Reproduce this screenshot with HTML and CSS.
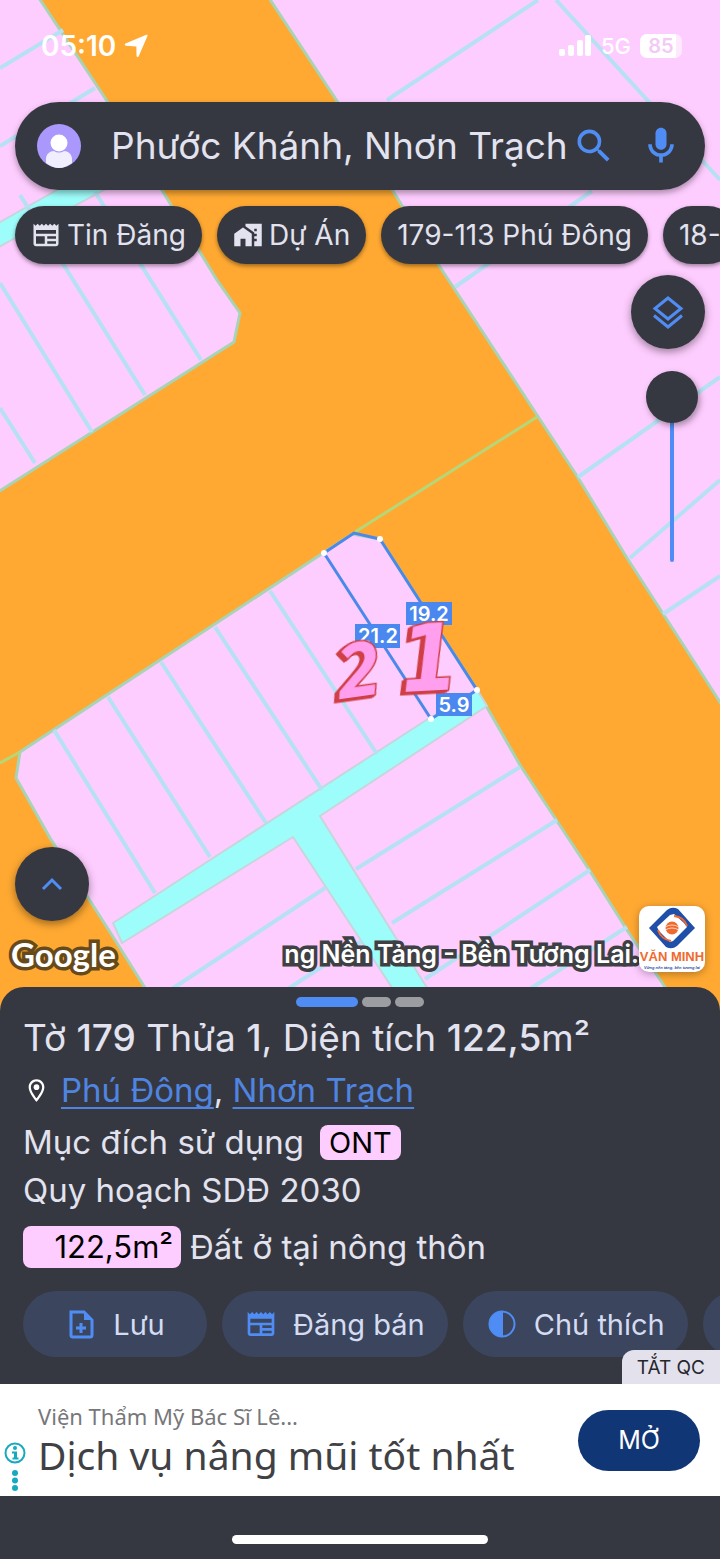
FILE: index.html
```
<!DOCTYPE html>
<html lang="vi">
<head>
    <meta charset="UTF-8">
    <meta name="viewport" content="width=device-width, initial-scale=1.0">
    <title>Phước Khánh, Nhơn Trạch</title>
    <link rel="stylesheet" href="styles.css">
</head>
<body>
<main class="map">
    <!-- Parcel map -->
    <svg class="map-canvas" viewBox="0 0 720 1012" preserveAspectRatio="xMidYMin slice" role="img" aria-label="Bản đồ thửa đất">
        <g class="land">
            <polygon points="-5,-5 37,-5 107,101 168,200 217,280 240,313 234,342 -5,494"/>
            <polygon points="267,-5 337,101 393,191 438,264 537,415 577,476 627,558 693,660 725,710 725,-5"/>
            <polygon points="352,534 380,539 477,690 520,765 590,871 627,930 665,987 682,1015 162,1015 115,940 50,838 16,778 20,752"/>
        </g>
        <g class="canal">
            <polygon points="-5,225 135,146 150,165 -5,249"/>
            <polygon points="113,923 210,860 431,717 477,690 487,706 320,816 444,1015 410,1015 293,837 122,943"/>
        </g>
        <g class="lots">
            <path d="M0 68L63 30M0 146L95 88M95 192L201 360M20 195L145 395M0 283L92 432M0 408L35 463"/>
            <path d="M538 0L387 100M556 0L720 180M592 191L455 287M720 377L578 477M720 480L630 558M720 576L663 614"/>
            <path d="M270 591L377 754M215 627L322 790M161 662L266 823M108 697L210 857M54 730L155 893"/>
            <path d="M325 888L140 1010M362 941L255 1010M356 869L520 767M392 923L557 820M425 979L590 870M500 1008L627 927"/>
        </g>
        <path class="boundary" d="M0 763L20 752M355 532L537 417"/>

        <polygon class="selected" points="324,553 354,533 380,539 477,690 431,719"/>
        <g class="node">
            <circle cx="324" cy="553" r="3"/>
            <circle cx="380" cy="539" r="3"/>
            <circle cx="477" cy="690" r="3"/>
            <circle cx="431" cy="719" r="3"/>
        </g>
        <g class="length">
            <rect x="406" y="602" width="46" height="23"/>
            <rect x="355" y="624" width="45" height="24"/>
            <rect x="436" y="693" width="36" height="23"/>
            <text x="429" y="621">19.2</text>
            <text x="378" y="643">21.2</text>
            <text x="454" y="712">5.9</text>
        </g>
        <text class="lot-no lot-small" x="341" y="699" transform="rotate(-8 341 699)">2</text>
        <text class="lot-no lot-big" x="402" y="692" transform="rotate(-3 402 692)">1</text>
    </svg>

    <div class="status">
        <span class="time">05:10</span>
        <svg width="24" height="24" viewBox="0 0 22 22" fill="#fff" aria-hidden="true"><path d="M20.500.8c.8-.3 1.300.2 1 1L13.500 20.500c-.5 1-1.800.9-2-.3l-.2-8.800-9.500-.6C.4 10.300.4 9 1.400 8.600z"/></svg>
        <svg class="signal" width="33" height="22" viewBox="0 0 33 22" fill="#fff" aria-hidden="true"><rect y="14" width="6" height="7" rx="2"/><rect x="9" y="10" width="6" height="11" rx="2"/><rect x="18" y="5" width="6" height="16" rx="2"/><rect x="26" width="6" height="21" rx="2"/></svg>
        <span class="network">5G</span>
        <span class="battery">85</span>
    </div>

    <form class="search">
        <svg class="avatar" viewBox="0 0 44 44" aria-hidden="true">
            <circle cx="22" cy="22" r="22" fill="#ab98fd"/>
            <circle cx="22" cy="19" r="8.500" fill="#fff"/>
            <path d="M9 39V35c0-5 4-8 8-8 3 2 7 2 10 0 4 0 8 3 8 8v4q-13 10-26 0z" fill="#f1efff"/>
        </svg>
        <input type="text" value="Phước Khánh, Nhơn Trạch" aria-label="Tìm kiếm">
        <button type="button" aria-label="Tìm">
            <svg width="44" height="44" viewBox="0 0 24 24"><path d="M15.500 14h-.79l-.28-.27A6.470 6.470 0 0 0 16 9.500 6.500 6.500 0 1 0 9.500 16c1.610 0 3.090-.59 4.230-1.570l.27.28v.79l5 4.990L20.490 19l-4.990-5zm-6 0C7.010 14 5 11.990 5 9.500S7.010 5 9.500 5 14 7.010 14 9.500 11.990 14 9.500 14z"/></svg>
        </button>
        <button type="button" aria-label="Giọng nói">
            <svg width="44" height="44" viewBox="0 0 24 24"><path d="M12 14c1.660 0 3-1.340 3-3V5c0-1.660-1.340-3-3-3S9 3.340 9 5v6c0 1.660 1.340 3 3 3z"/><path d="M17 11c0 2.760-2.240 5-5 5s-5-2.240-5-5H5c0 3.530 2.610 6.430 6 6.920V21h2v-3.080c3.390-.49 6-3.390 6-6.920h-2z"/></svg>
        </button>
    </form>

    <nav class="chips">
        <button type="button">
            <svg width="30" height="30" viewBox="0 0 24 24"><path d="M22 3l-1.670 1.670L18.670 3 17 4.670 15.330 3l-1.660 1.670L12 3l-1.670 1.670L8.670 3 7 4.670 5.330 3 3.670 4.670 2 3v16c0 1.100.9 2 2 2h16c1.100 0 2-.9 2-2V3zM11 19H4v-6h7v6zm9 0h-7v-2h7v2zm0-4h-7v-2h7v2zm0-4H4V8h16v3z"/></svg>
            Tin Đăng
        </button>
        <button type="button">
            <svg width="30" height="30" viewBox="0 0 24 24"><path d="M1 11v10h5v-6h4v6h5V11L8 6z"/><path d="M10 3v1.970l7 5V11h2v2h-2v2h2v2h-2v4h6V3H10zm9 6h-2V7h2v2z"/></svg>
            Dự Án
        </button>
        <button type="button">179-113 Phú Đông</button>
        <button type="button">18-</button>
    </nav>

    <div class="tools">
        <button class="round" type="button" aria-label="Lớp bản đồ">
            <svg width="38" height="38" viewBox="0 0 38 38" fill="none" stroke="#4f8df5" stroke-width="3"><path d="M19 5l13 10.500L19 26 6 15.500zM5 22.500L19 34l14-11.500"/></svg>
        </button>
        <input class="opacity" type="range" min="0" max="100" value="0" aria-label="Độ mờ">
    </div>

    <div class="map-foot">
        <button class="round" type="button" aria-label="Mở rộng">
            <svg width="24" height="24" viewBox="0 0 24 24" fill="none" stroke="#4f8df5" stroke-width="3"><path d="M3 17l9-9 9 9"/></svg>
        </button>
        <div class="credits">
            <span class="google">Google</span>
            <span class="slogan">ng Nền Tảng - Bền Tương Lai.</span>
            <div class="brand">
                <svg viewBox="0 0 46 42" width="46" height="42" aria-hidden="true">
                    <path fill="#1f4fa8" fill-rule="evenodd" d="M0 21L18 3q5-4 11-1L46 21 28 39q-5 4-11 1zM8 20l2 4 11 11 3-1L38 20l-3-4L25 7l-4 1z"/>
                    <path fill="none" stroke="#f0692e" stroke-width="2" d="M25 9q10 1 13 10M9 23q3 9 13 11"/>
                    <circle cx="23" cy="21" r="6.500" fill="#f0692e"/>
                    <path stroke="#fff" stroke-width=".7" fill="none" d="M16 20q7-4 14 0M16 23q7-4 14 0"/>
                </svg>
                <b>VĂN MINH</b>
                <small>Vững nền tảng, bền tương lai</small>
            </div>
        </div>
    </div>
</main>

<section class="sheet">
    <div class="pager"><i class="on"></i><i></i><i></i></div>
    <h1>Tờ <b>179</b> Thửa <b>1</b>, Diện tích <b>122,5</b>m²</h1>
    <p class="place">
        <svg width="27" height="27" viewBox="0 0 24 24" fill="#fff" aria-hidden="true"><path d="M12 2C8.130 2 5 5.130 5 9c0 5.250 7 13 7 13s7-7.750 7-13c0-3.870-3.130-7-7-7zM7 9c0-2.760 2.240-5 5-5s5 2.240 5 5c0 2.880-2.880 7.190-5 9.880C9.920 16.210 7 11.850 7 9z"/><circle cx="12" cy="9" r="2.500"/></svg>
        <span><a href="#">Phú Đông</a>, <a href="#">Nhơn Trạch</a></span>
    </p>
    <p class="purpose">Mục đích sử dụng <span class="tag">ONT</span></p>
    <p class="plan">Quy hoạch SDĐ 2030</p>
    <p class="usage"><span class="area">122,5m²</span> Đất ở tại nông thôn</p>
    <div class="actions">
        <button type="button">
            <svg width="32" height="32" viewBox="0 0 32 32" fill="none" stroke="#4f8df5" stroke-width="3"><path d="M6 4h13l8 8v15q0 2-2 2H8q-2 0-2-2zM16 15v10M11 20h10"/><path d="M19 4v8h8z" fill="#4f8df5" stroke="none"/></svg>
            Lưu
        </button>
        <button type="button">
            <svg width="32" height="32" viewBox="0 0 24 24"><path d="M22 3l-1.670 1.670L18.670 3 17 4.670 15.330 3l-1.660 1.670L12 3l-1.670 1.670L8.670 3 7 4.670 5.330 3 3.670 4.670 2 3v16c0 1.100.9 2 2 2h16c1.100 0 2-.9 2-2V3zM11 19H4v-6h7v6zm9 0h-7v-2h7v2zm0-4h-7v-2h7v2zm0-4H4V8h16v3z"/></svg>
            Đăng bán
        </button>
        <button type="button">
            <svg width="32" height="32" viewBox="0 0 32 32"><circle cx="16" cy="16" r="12.500" fill="none" stroke="#4f8df5" stroke-width="2"/><path d="M17 3a13 13 0 1 0 0 26z"/></svg>
            Chú thích
        </button>
        <button type="button" aria-label="Thêm"></button>
    </div>
</section>

<aside class="ad">
    <button class="ad-off" type="button">TẮT QC</button>
    <div class="ad-info">
        <svg width="22" height="50" viewBox="0 0 22 50" fill="#17a9bf" aria-hidden="true"><circle cx="11" cy="11" r="9.500" fill="none" stroke="#17a9bf" stroke-width="2"/><circle cx="11" cy="6" r="2"/><path d="M8 9.500h5v6h1.500v2h-6v-2H10v-4H8z"/><circle cx="11" cy="31" r="3"/><circle cx="11" cy="38.500" r="3"/><circle cx="11" cy="46" r="3"/></svg>
    </div>
    <div class="ad-text">
        <p class="ad-name">Viện Thẩm Mỹ Bác Sĩ Lê...</p>
        <p class="ad-title">Dịch vụ nâng mũi tốt nhất</p>
    </div>
    <button class="ad-open" type="button">MỞ</button>
</aside>
<footer class="home"><i></i></footer>
</body>
</html>
```
FILE: styles.css
```
* {
    box-sizing: border-box;
}
body {
    margin: 0;
    min-height: 100vh;
    display: flex;
    flex-direction: column;
    background: #363841;
    color: #e2e3ef;
    font-family: Inter, "Noto Sans", sans-serif;
    overflow-x: hidden;
}
button {
    border: 0;
    padding: 0;
    background: none;
    font: inherit;
    color: inherit;
    cursor: pointer;
}
p, h1 {
    margin: 0;
    font-weight: 400;
    white-space: nowrap;
}

/* map */
.map {
    position: relative;
    flex: 1;
    display: flex;
    flex-direction: column;
    padding: 24px 0 40px;
    background: #ffa932;
}
.map-canvas {
    position: absolute;
    inset: 0;
    width: 100%;
    height: 100%;
}
.map > :not(.map-canvas) {
    position: relative;
}
.land polygon {
    fill: #fecdff;
    stroke: #a8d3b4;
    stroke-width: 3;
}
.canal polygon {
    fill: #9dfdfb;
    stroke: #c9d5dc;
    stroke-width: 2;
}
.lots path {
    fill: none;
    stroke: #b5e1f3;
    stroke-width: 4;
}
.boundary {
    stroke: #b6d778;
    stroke-width: 3;
}
.selected {
    fill: none;
    stroke: #4a88ea;
    stroke-width: 3;
}
.node circle {
    fill: #fff;
}
.length rect {
    fill: #4a88f0;
}
.length text {
    fill: #fff;
    font-size: 20px;
    font-weight: 600;
    text-anchor: middle;
}
.lot-no {
    font-weight: 700;
    font-style: italic;
    fill: #ff9fee;
    stroke: #cf3f45;
    stroke-width: 3;
    paint-order: stroke;
    filter: drop-shadow(-2px 1px 0 #cf3f45) drop-shadow(-2px 1px 0 #cf3f45);
}
.lot-small {
    font-family: "Open Sans", sans-serif;
    font-size: 76px;
}
.lot-big {
    font-family: "DejaVu Sans Condensed", "DejaVu Sans", sans-serif;
    font-size: 92px;
}

/* status bar */
.status {
    display: flex;
    align-items: center;
    height: 44px;
    padding: 0 38px 0 41px;
    color: #fff;
    font-weight: 600;
}
.time {
    font-size: 28px;
    margin-right: 8px;
}
.signal {
    margin-left: auto;
}
.network {
    margin: 0 9px;
    font-size: 22px;
    font-weight: 500;
}
.battery {
    width: 42px;
    border-radius: 7px;
    background: linear-gradient(90deg, #fff 85%, #ffe9ff 85%);
    color: #f3c9f6;
    font-size: 20px;
    line-height: 24px;
    text-align: center;
}

/* search */
.search {
    display: flex;
    align-items: center;
    height: 88px;
    margin: 34px 15px 0;
    padding: 0 22px;
    border-radius: 44px;
    background: #363841;
    box-shadow: 0 3px 6px rgba(0, 0, 0, 0.35);
}
.avatar {
    width: 44px;
    height: 44px;
    margin-right: 30px;
}
.search input {
    flex: 1;
    min-width: 0;
    padding: 0;
    border: 0;
    outline: 0;
    background: none;
    color: inherit;
    font: 400 37px/48px Inter, sans-serif;
}
.search button {
    display: flex;
    fill: #4f8df5;
}
.search button + button {
    margin-left: 23px;
}

.chips {
    display: flex;
    gap: 15px;
    padding: 16px 0 10px 15px;
    overflow: hidden;
}
.chips button {
    display: flex;
    align-items: center;
    gap: 6px;
    flex: none;
    height: 58px;
    padding: 0 16px;
    border-radius: 29px;
    background: #363841;
    fill: #e2e3ef;
    font-size: 28px;
    box-shadow: 0 2px 4px rgba(0, 0, 0, 0.4);
}

/* floating controls */
.round {
    display: flex;
    align-items: center;
    justify-content: center;
    width: 74px;
    height: 74px;
    border-radius: 50%;
    background: #363841;
    box-shadow: 0 3px 8px rgba(0, 0, 0, 0.4);
}
.tools {
    display: flex;
    flex-direction: column;
    align-items: flex-end;
    gap: 22px;
    padding: 1px 15px 0;
}
.opacity {
    appearance: none;
    writing-mode: vertical-lr;
    width: 52px;
    height: 191px;
    margin: 0 7px 0 0;
    background: none;
}
.opacity::-webkit-slider-runnable-track {
    width: 4px;
    height: 100%;
    border-radius: 2px;
    background: #4f8df5;
}
.opacity::-webkit-slider-thumb {
    appearance: none;
    width: 52px;
    height: 52px;
    margin-left: -24px;
    border-radius: 50%;
    background: #363841;
    box-shadow: 2px 3px 6px rgba(0, 0, 0, 0.35);
}
.map-foot {
    margin-top: auto;
    padding: 0 15px;
}
.credits {
    display: flex;
    align-items: flex-end;
    margin-top: -15px;
}
.google, .slogan {
    color: #fff;
    -webkit-text-stroke: 7px #3f4044;
    paint-order: stroke fill;
    line-height: 36px;
    white-space: nowrap;
}
.google {
    margin-left: -4px;
    -webkit-text-stroke-color: #664a1c;
    font-family: Lato, sans-serif;
    font-size: 33px;
    font-weight: 700;
}
.slogan {
    margin-left: auto;
    font-size: 25px;
    font-weight: 600;
}
.brand {
    position: relative;
    display: flex;
    flex-direction: column;
    align-items: center;
    width: 66px;
    height: 66px;
    padding-top: 1px;
    border-radius: 10px;
    background: #fff;
    white-space: nowrap;
    box-shadow: 0 2px 8px rgba(0, 0, 0, 0.3);
}
.brand b {
    color: #f0692e;
    font: 700 13px/16px "Liberation Sans", sans-serif;
}
.brand small {
    color: #1f4fa8;
    font: italic 700 4px/5px "Liberation Sans", sans-serif;
}

/* parcel sheet */
.sheet {
    position: relative;
    margin-top: -25px;
    padding: 10px 0 27px 23px;
    border-radius: 24px 24px 0 0;
    background: #363841;
    font-size: 33px;
    overflow: hidden;
}
.pager {
    display: flex;
    justify-content: center;
    gap: 4px;
    margin: 0 23px 5px 0;
}
.pager i {
    width: 29px;
    height: 10px;
    border-radius: 5px;
    background: #9c9da0;
}
.pager .on {
    width: 62px;
    background: #4f8df5;
}
.sheet h1 {
    font-size: 37px;
    line-height: 52px;
}
.sheet h1 b {
    font-weight: 500;
}
.place, .purpose {
    display: flex;
    align-items: center;
    line-height: 52px;
}
.place {
    gap: 11px;
}
.place a {
    color: #4f85e0;
    text-decoration-thickness: 2px;
    text-underline-offset: 5px;
    text-decoration-skip-ink: none;
}
.tag, .area {
    border-radius: 8px;
    background: #fecdff;
    color: #000;
}
.tag {
    margin-left: 16px;
    padding: 0 9px;
    font-size: 29px;
    line-height: 35px;
}
.plan {
    line-height: 44px;
}
.usage {
    display: flex;
    gap: 9px;
    margin: 14px 0 23px;
    line-height: 42px;
}
.area {
    width: 158px;
    padding-right: 8px;
    font-size: 31px;
    text-align: right;
}
.actions {
    display: flex;
    gap: 15px;
}
.actions button {
    display: flex;
    align-items: center;
    justify-content: center;
    gap: 16px;
    flex: none;
    min-width: 184px;
    height: 66px;
    padding: 0 23px;
    border-radius: 33px;
    background: #3b465e;
    color: #d5dcf2;
    fill: #4f8df5;
    font-size: 29px;
}

/* ad banner */
.ad {
    position: relative;
    display: flex;
    align-items: center;
    height: 112px;
    padding-right: 20px;
    background: #fff;
}
.ad-off {
    position: absolute;
    right: 0;
    bottom: 100%;
    height: 34px;
    padding: 0 15px;
    border-radius: 12px 0 0 0;
    background: #e3e1ec;
    color: #26272d;
    font-size: 19px;
}
.ad-info {
    align-self: flex-end;
    width: 38px;
    padding: 0 4px;
}
.ad-text {
    flex: 1;
    font-family: "Noto Sans", sans-serif;
}
.ad-name {
    color: #77777a;
    font-size: 22px;
    line-height: 30px;
}
.ad-title {
    color: #404145;
    font-size: 39px;
    line-height: 48px;
}
.ad-open {
    width: 122px;
    height: 61px;
    border-radius: 31px;
    background: #113676;
    color: #fff;
    font-size: 25px;
}
.home {
    display: flex;
    justify-content: center;
    padding: 39px 0 15px;
}
.home i {
    width: 256px;
    height: 9px;
    border-radius: 5px;
    background: #fff;
}
```
